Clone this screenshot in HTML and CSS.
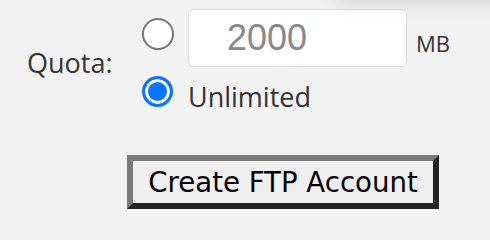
FILE: index.html
```html
<!DOCTYPE html>
<html>
<head>
<meta charset="utf-8">
<link rel="stylesheet" href="styles.css">
</head>
<body>
<div class="top-shadow"></div>
<form class="form">
  <div class="quota">
    <label class="label">Quota:</label>
    <div class="options">
      <div class="opt opt-limit">
        <input class="radio" type="radio" name="quota">
        <input class="amount" type="text" value="2000">
        <span class="unit">MB</span>
      </div>
      <div class="opt opt-unlimited">
        <input class="radio" type="radio" name="quota" checked>
        <span class="opt-text">Unlimited</span>
      </div>
    </div>
  </div>
  <div class="actions">
    <button type="button" class="btn">Create FTP Account</button>
  </div>
</form>
</body>
</html>
```

FILE: styles.css
```css
html, body {
  margin: 0;
  padding: 0;
  background: #f2f2f2;
  width: 490px;
  height: 232px;
  overflow: hidden;
  position: relative;
}

.top-shadow {
  position: absolute;
  top: -50px;
  left: 330px;
  width: 220px;
  height: 50px;
  border-radius: 14px;
  background: #f2f2f2;
  box-shadow: 0 2px 18px rgba(0, 0, 0, 0.14);
}

.form {
  margin: 0;
  padding: 9px 0 0 0;
  font-family: "Open Sans", "Noto Sans", sans-serif;
  color: #333;
}

.quota {
  display: grid;
  grid-template-columns: 115px auto;
  padding-left: 27px;
}

.label {
  font-size: 27px;
  line-height: 27px;
  margin-top: 40px;
  color: #333;
}

.options {
  display: flex;
  flex-direction: column;
}

.opt {
  display: flex;
  align-items: flex-start;
}

.radio {
  appearance: none;
  -webkit-appearance: none;
  margin: 0;
  width: 32px;
  height: 32px;
  border-radius: 50%;
  box-sizing: border-box;
  border: 2px solid #767676;
  background: #ffffff;
  flex: none;
}

.radio:checked {
  border: 3px solid #0a75ff;
  background: #0a75ff;
  box-shadow: inset 0 0 0 3px #ffffff;
}

.opt-limit .radio {
  margin-top: 9px;
}

.amount {
  margin: 0 0 0 14px;
  width: 219px;
  height: 58px;
  box-sizing: border-box;
  border: 1px solid #dcdcdc;
  border-radius: 6px;
  background: #ffffff;
  padding: 0 0 0 38px;
  font-family: "Liberation Sans", Arial, sans-serif;
  font-size: 36px;
  color: #888;
  outline: none;
}

.unit {
  margin-left: 9px;
  font-size: 22px;
  line-height: 22px;
  margin-top: 23px;
  color: #333;
}

.opt-unlimited {
  margin-top: 9px;
}

.opt-unlimited .radio {
  width: 31px;
  height: 31px;
}

.opt-text {
  margin-left: 15px;
  font-size: 27px;
  line-height: 27px;
  margin-top: 7px;
  color: #333;
}

.actions {
  display: flex;
  padding-left: 127px;
  margin-top: 45px;
}

.btn {
  width: 312px;
  height: 54px;
  box-sizing: border-box;
  border-width: 6px;
  border-style: solid;
  border-color: #7a7a7a #222222 #222222 #7a7a7a;
  background: #efefef;
  font-family: "DejaVu Sans", Verdana, sans-serif;
  font-size: 27.6px;
  color: #000;
  padding: 0;
  margin: 0;
  border-radius: 0;
}
```
